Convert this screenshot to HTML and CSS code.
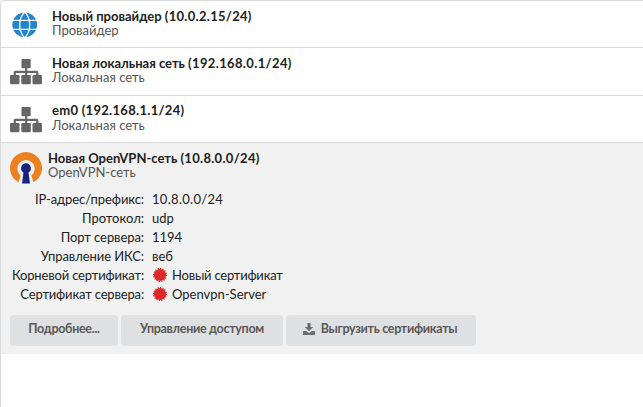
FILE: index.html
```html
<!DOCTYPE html>
<html lang="ru">
<head>
<meta charset="utf-8">
<title>Сети</title>
<link rel="stylesheet" href="styles.css">
</head>
<body>
<svg class="defs" width="0" height="0">
  <symbol id="sitemap" viewBox="0 0 32 26">
    <rect x="11.500" y="0" width="9.200" height="9.200" rx="1"/>
    <rect x="0" y="16" width="9.500" height="9.300" rx="1.300"/>
    <rect x="11.300" y="16" width="9.500" height="9.300" rx="1.300"/>
    <rect x="22.500" y="16" width="9.500" height="9.300" rx="1.300"/>
    <path d="M15 9h2.200v2.800h9.600q1.600 0 1.600 1.600V16h-2.200v-2.100h-9V16H15v-2.100H5.900V16H3.700v-2.600q0-1.600 1.600-1.600H15z"/>
  </symbol>
  <symbol id="seal" viewBox="0 0 14 14">
    <circle cx="7" cy="7" r="6.100"/>
    <circle class="teeth" cx="7" cy="7" r="6.400" pathLength="32"/>
  </symbol>
</svg>
<main class="panel">
  <section class="row">
    <svg class="icon globe" viewBox="0 0 32 32">
      <circle cx="15.700" cy="15.800" r="12.400"/>
      <path d="M3 11.300h26M3 20.400h26M15.700 3C9 9.500 9 22 15.700 29M15.700 3c6.700 6.500 6.700 19 0 26"/>
    </svg>
    <div class="text"><div class="title">Новый провайдер <span class="address">(10.0.2.15/24)</span></div><div class="sub">Провайдер</div></div>
  </section>
  <section class="row">
    <svg class="icon net"><use href="#sitemap"/></svg>
    <div class="text"><div class="title">Новая локальная сеть <span class="address wide">(192.168.0.1/24)</span></div><div class="sub">Локальная сеть</div></div>
  </section>
  <section class="row bridge">
    <svg class="icon net"><use href="#sitemap"/></svg>
    <div class="text"><div class="title"><span class="address">em0 (192.168.1.1/24)</span></div><div class="sub">Локальная сеть</div></div>
  </section>
  <section class="active">
    <div class="head">
      <svg class="vpn" viewBox="0 0 32 32">
        <path fill="#ea8020" d="M8.600 30.300A16 16 0 1 1 23.400 30.300L21.400 23.500A8.700 8.700 0 1 0 10.600 23.500z"/>
        <path fill="#1a237e" d="M16 11.300a4.900 4.900 0 0 1 2.500 9.100L20 31.600h-8l1.500-11.200A4.900 4.900 0 0 1 16 11.300z"/>
      </svg>
      <div class="text"><div class="title">Новая OpenVPN-сеть <span class="address">(10.8.0.0/24)</span></div><div class="sub">OpenVPN-сеть</div></div>
    </div>
    <dl class="details">
      <dt class="snug">IP-адрес/префикс:</dt><dd class="address">10.8.0.0/24</dd>
      <dt>Протокол:</dt><dd>udp</dd>
      <dt class="snug">Порт сервера:</dt><dd>1194</dd>
      <dt class="snug">Управление ИКС:</dt><dd>веб</dd>
      <dt class="tight">Корневой сертификат:</dt><dd class="tight"><svg class="seal"><use href="#seal"/></svg>Новый сертификат</dd>
      <dt class="tight">Сертификат сервера:</dt><dd><svg class="seal"><use href="#seal"/></svg>Openvpn-Server</dd>
    </dl>
    <div class="actions">
      <button class="more">Подробнее...</button>
      <button class="access">Управление доступом</button>
      <button class="export"><svg class="download" viewBox="0 0 12 12"><path d="M4.500 0h3v4h2.700L6 8.200 1.800 4h2.700zM.5 8h2.800L6 10.200 8.700 8h2.800q.5 0 .5.500v3q0 .5-.5.500H.5Q0 12 0 11.500v-3Q0 8 .5 8z"/></svg>Выгрузить сертификаты</button>
    </div>
  </section>
</main>
</body>
</html>
```
FILE: styles.css
```css
* { box-sizing: border-box; }
body {
  margin: 0;
  background: #fff;
  color: #212121;
  font: 13px/14px Lato, "Liberation Sans", sans-serif;
  overflow: hidden;
}
.defs { position: absolute; }
.panel {
  width: 660px;
  height: 420px;
  border: 1px solid #d8d9da;
  border-radius: 4px;
}
.row {
  display: flex;
  height: 47.33px;
  padding: 8px 0 0 8px;
  border-bottom: 1px solid #d8d9da;
}
.icon { width: 32px; height: 32px; margin-right: 11px; }
.globe { fill: #2185d0; }
.globe path { fill: none; stroke: #fff; stroke-width: 1.300; }
.net { position: relative; left: 0.5px; height: 26px; margin-top: 3px; fill: #666; }
.title { font-weight: 700; }
.sub { color: #555; }
.bridge .title { margin-top: -1px; margin-bottom: 1px; }
.address { letter-spacing: 0.3px; }
.wide { letter-spacing: 0.36px; }
.active { height: 211px; padding: 8px 9px; background: #f1f1f1; }
.head { display: flex; height: 39px; }
.vpn { width: 32px; height: 32px; margin: 1px 6px 0 0; }
.details {
  display: grid;
  grid-template-columns: 134px 1fr;
  grid-auto-rows: 19px;
  column-gap: 8px;
  margin: 0;
  line-height: 19px;
}
dt { text-align: right; white-space: nowrap; }
dd { display: flex; align-items: center; margin: 0; }
.snug { letter-spacing: -0.08px; }
dt.tight { letter-spacing: -0.16px; }
.tight { letter-spacing: -0.22px; }
.seal { width: 14px; height: 14px; margin: 0 5px 0 1px; fill: #db2828; }
.teeth { fill: none; stroke: #db2828; stroke-width: 1.200; stroke-dasharray: 1 1; }
.actions { display: flex; gap: 3px; margin-top: 11px; }
button {
  height: 31px;
  padding: 0 0 2px;
  border: 0;
  border-radius: 4px;
  background: #dfe0e1;
  color: #595959;
  font: 700 12.500px/14px Lato, "Liberation Sans", sans-serif;
  letter-spacing: -0.3px;
  white-space: nowrap;
}
.more { width: 108px; }
.access { width: 162px; }
.export { display: flex; align-items: center; justify-content: center; width: 190px; padding-right: 2px; }
.download { width: 12px; height: 12px; margin-right: 6px; fill: #6b6c6d; }
```
